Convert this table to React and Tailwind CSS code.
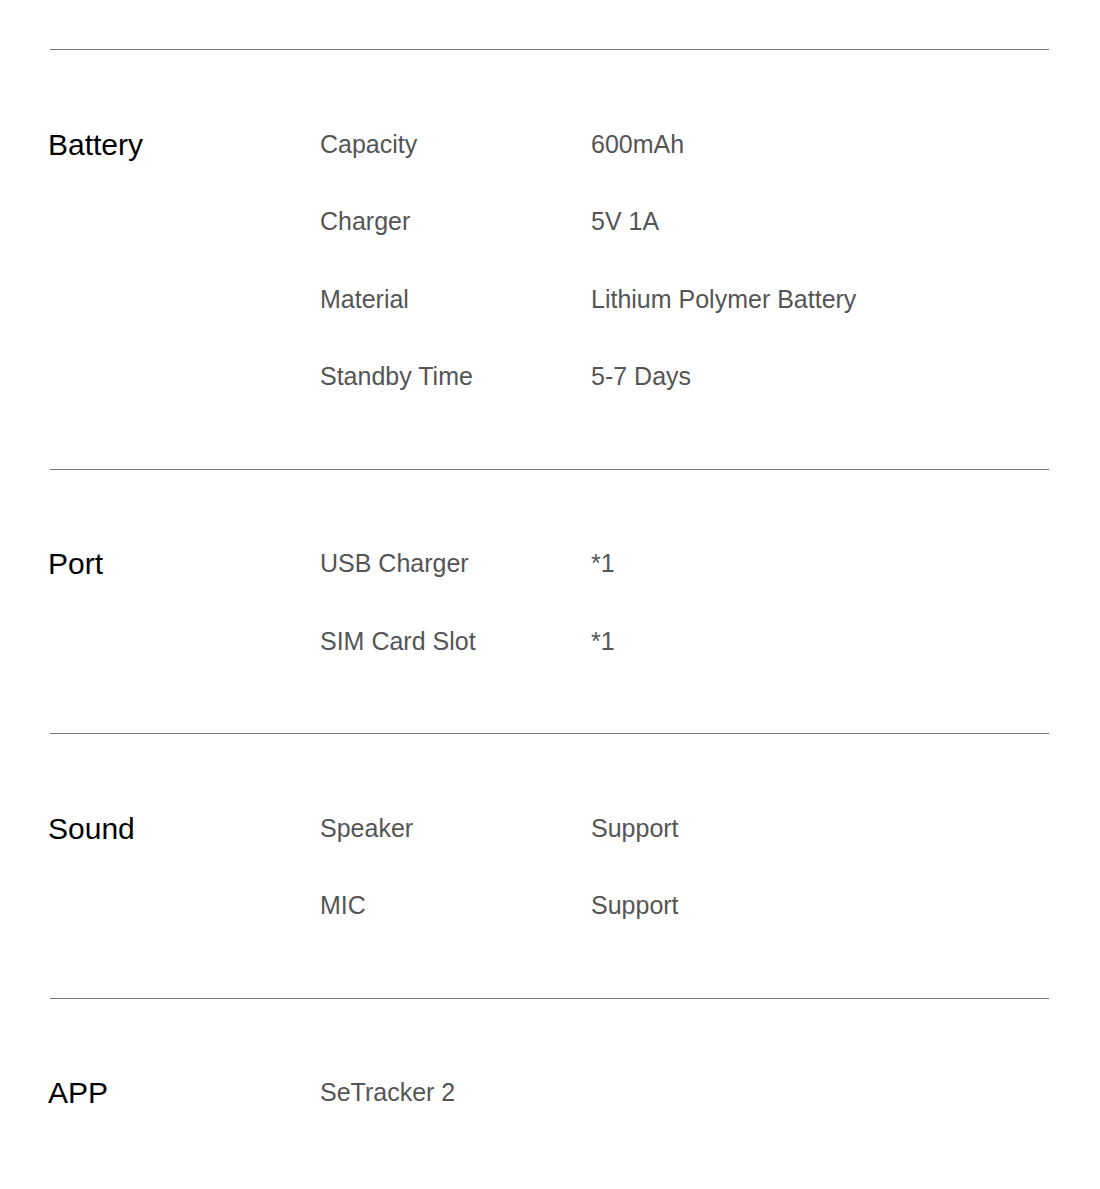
const specs = [
  {
    title: "Battery",
    rows: [
      ["Capacity", "600mAh"],
      ["Charger", "5V 1A"],
      ["Material", "Lithium Polymer Battery"],
      ["Standby Time", "5-7 Days"],
    ],
  },
  {
    title: "Port",
    rows: [
      ["USB Charger", "*1"],
      ["SIM Card Slot", "*1"],
    ],
  },
  {
    title: "Sound",
    rows: [
      ["Speaker", "Support"],
      ["MIC", "Support"],
    ],
  },
  {
    title: "APP",
    rows: [["SeTracker 2", ""]],
  },
];

const App = () => {
  return (
    <div className="w-[1100px] min-h-[1189px] bg-white pt-[49px] pl-[47px] font-['Liberation_Sans',Arial,sans-serif]">
      {specs.map((section) => (
        <div key={section.title}>
          {/* divider */}
          <div className="ml-[3px] w-[999px] h-px bg-[#7a7a7a]" />

          <div className="grid grid-cols-[273px_271px_1fr] pt-[55.5px] pb-[53px]">
            <div className="text-[30px] text-black leading-[77.5px] translate-x-[1px]">{section.title}</div>

            <div className="col-span-2">
              {section.rows.map(([key, value]) => (
                <div key={key} className="grid grid-cols-[271px_1fr] h-[77.5px] items-center text-[25px] text-[#555555] leading-[77.5px]">
                  <span>{key}</span>
                  <span>{value}</span>
                </div>
              ))}
            </div>
          </div>
        </div>
      ))}
    </div>
  );
};

export default App;
